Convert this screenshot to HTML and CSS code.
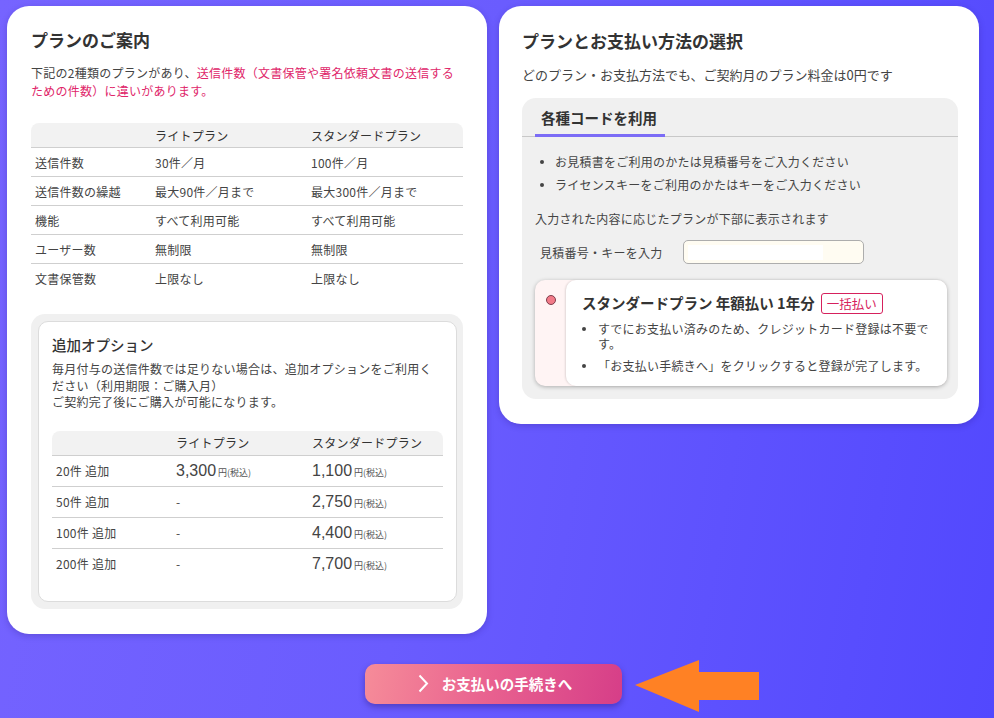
FILE: index.html
```html
<!DOCTYPE html>
<html lang="ja">
<head>
<meta charset="utf-8">
<title>プランとお支払い方法の選択</title>
<link rel="stylesheet" href="styles.css">
</head>
<body>
<div class="page">
  <div class="cards">
    <section class="card card-left">
      <h2 class="card-title">プランのご案内</h2>
      <p class="lead">下記の2種類のプランがあり、<span class="accent">送信件数（文書保管や署名依頼文書の送信するための件数）に違いがあります。</span></p>
      <table class="plan-table">
        <colgroup><col class="c1"><col class="c2"><col class="c3"></colgroup>
        <thead>
          <tr><th></th><th>ライトプラン</th><th>スタンダードプラン</th></tr>
        </thead>
        <tbody>
          <tr><td>送信件数</td><td>30件／月</td><td>100件／月</td></tr>
          <tr><td>送信件数の繰越</td><td>最大90件／月まで</td><td>最大300件／月まで</td></tr>
          <tr><td>機能</td><td>すべて利用可能</td><td>すべて利用可能</td></tr>
          <tr><td>ユーザー数</td><td>無制限</td><td>無制限</td></tr>
          <tr><td>文書保管数</td><td>上限なし</td><td>上限なし</td></tr>
        </tbody>
      </table>
      <div class="option-outer">
        <div class="option-inner">
          <h3 class="option-title">追加オプション</h3>
          <p class="option-text">毎月付与の送信件数では足りない場合は、追加オプションをご利用ください（利用期限：ご購入月）<br>ご契約完了後にご購入が可能になります。</p>
          <table class="option-table">
            <colgroup><col class="o1"><col class="o2"><col class="o3"></colgroup>
            <thead>
              <tr><th></th><th>ライトプラン</th><th>スタンダードプラン</th></tr>
            </thead>
            <tbody>
              <tr><td>20件 追加</td><td><span class="price">3,300</span><span class="yen">円(税込)</span></td><td><span class="price">1,100</span><span class="yen">円(税込)</span></td></tr>
              <tr><td>50件 追加</td><td>-</td><td><span class="price">2,750</span><span class="yen">円(税込)</span></td></tr>
              <tr><td>100件 追加</td><td>-</td><td><span class="price">4,400</span><span class="yen">円(税込)</span></td></tr>
              <tr><td>200件 追加</td><td>-</td><td><span class="price">7,700</span><span class="yen">円(税込)</span></td></tr>
            </tbody>
          </table>
        </div>
      </div>
    </section>

    <section class="card card-right">
      <h2 class="card-title">プランとお支払い方法の選択</h2>
      <p class="sub">どのプラン・お支払方法でも、ご契約月のプラン料金は0円です</p>
      <div class="panel">
        <div class="tabs"><div class="tab">各種コードを利用</div></div>
        <ul class="dots code-list">
          <li>お見積書をご利用のかたは見積番号をご入力ください</li>
          <li>ライセンスキーをご利用のかたはキーをご入力ください</li>
        </ul>
        <p class="note">入力された内容に応じたプランが下部に表示されます</p>
        <div class="input-row">
          <label class="input-label" for="code">見積番号・キーを入力</label>
          <input id="code" class="code-input" type="text">
        </div>
        <div class="plan">
          <div class="plan-radio"><span class="radio"></span></div>
          <div class="plan-body">
            <div class="plan-head"><span class="plan-name">スタンダードプラン 年額払い 1年分</span><span class="badge">一括払い</span></div>
            <ul class="dots plan-list">
              <li>すでにお支払い済みのため、クレジットカード登録は不要です。</li>
              <li>「お支払い手続きへ」をクリックすると登録が完了します。</li>
            </ul>
          </div>
        </div>
      </div>
    </section>
  </div>

  <div class="action">
    <div class="btn-wrap">
      <button class="pay-btn" type="button">
        <svg class="chev" width="11" height="19" viewBox="0 0 11 19"><path d="M1.5 1.5 L9 9.5 L1.5 17.5" fill="none" stroke="#fff" stroke-width="2"/></svg>
        <span>お支払いの手続きへ</span>
      </button>
      <svg class="arrow" width="126" height="52" viewBox="0 0 126 52"><polygon points="0,25 64,0 64,12 124,12 124,40 64,40 64,52" fill="#ff8124"/></svg>
    </div>
  </div>
</div>
</body>
</html>
```

FILE: styles.css
```css
* { box-sizing: border-box; }

html, body {
  margin: 0;
  padding: 0;
}

body {
  min-height: 718px;
  background: linear-gradient(100deg, #7664ff 0%, #6a5cfe 45%, #5248fe 100%);
  font-family: "Noto Sans CJK JP", "Noto Sans", sans-serif;
  font-size: 12px;
  letter-spacing: 0.25px;
  color: #444;
}

.page {
  padding: 6px 15px 0 7px;
}

.cards {
  display: flex;
  gap: 12px;
  align-items: flex-start;
}

.card {
  width: 480px;
  background: #fff;
  border-radius: 22px;
  box-shadow: 0 2px 6px rgba(40, 20, 120, 0.25);
}

.card-left {
  padding: 22px 24px 25px 24px;
}

.card-right {
  padding: 23px 21px 25px 23px;
}

.card-title {
  margin: 0;
  font-size: 17px;
  line-height: 24px;
  font-weight: 700;
  color: #333;
  letter-spacing: 0;
}

.lead {
  margin: 12px 0 0;
  line-height: 18px;
}

.accent {
  color: #e0266a;
}

/* plan table */
table {
  border-collapse: separate;
  border-spacing: 0;
  width: 100%;
  table-layout: fixed;
}

th {
  font-weight: 400;
  text-align: left;
  background: #f2f2f2;
  color: #333;
  border-bottom: 1px solid #cfcfcf;
  padding: 0 4px;
}

th:first-child { border-top-left-radius: 8px; }
th:last-child { border-top-right-radius: 8px; }

td {
  padding: 0 4px;
  border-bottom: 1px solid #cfcfcf;
  color: #444;
}

tbody tr:last-child td { border-bottom: none; }

.plan-table {
  margin-top: 23px;
}

.plan-table .c1 { width: 120px; }
.plan-table .c2 { width: 156px; }
.plan-table .c3 { width: 156px; }

.plan-table th { height: 25px; }
.plan-table td { height: 29px; }
.plan-table tbody tr:last-child td { height: 28px; }

/* option */
.option-outer {
  margin-top: 22px;
  background: #f0f0f0;
  border-radius: 14px;
  padding: 7px 6px 7px 7px;
}

.option-inner {
  background: #fff;
  border: 1px solid #dcdcdc;
  border-radius: 10px;
  padding: 13px 14px 22px 13px;
}

.option-title {
  margin: 0;
  font-size: 14.5px;
  line-height: 20px;
  font-weight: 500;
  color: #333;
  letter-spacing: 0;
}

.option-text {
  margin: 6px 0 0;
  line-height: 16.5px;
  max-width: 388px;
}

.option-table {
  margin-top: 20px;
}

.option-table .o1 { width: 120px; }
.option-table .o2 { width: 136px; }
.option-table .o3 { width: 135px; }

.option-table th { height: 25px; }
.option-table td { height: 31px; }
.option-table tbody tr:last-child td { height: 30px; }

.price {
  font-family: "Liberation Sans", Arial, sans-serif;
  font-size: 16px;
  letter-spacing: 0;
  color: #444;
}

.yen {
  font-size: 9px;
  letter-spacing: 0;
  color: #555;
  margin-left: 2px;
}

/* right card */
.sub {
  margin: 12px 0 0;
  font-size: 13px;
  line-height: 20px;
  letter-spacing: 0;
}

.panel {
  margin-top: 13px;
  background: #f0f0f0;
  border-radius: 14px;
  padding: 0 11px 13px 13px;
}

.tabs {
  border-bottom: 1px solid #c8c8c8;
  display: flex;
  margin: 0 -11px 0 -13px;
  padding-left: 13px;
}

.tab {
  font-size: 14.5px;
  font-weight: 700;
  color: #333;
  letter-spacing: 0;
  line-height: 20px;
  padding: 10px 8px 6px 6px;
  border-bottom: 3px solid #7b6cf6;
  margin-bottom: -1px;
}

.dots {
  list-style: none;
  margin: 0;
  padding: 0;
}

.dots li {
  display: flex;
  align-items: flex-start;
}

.dots li::before {
  content: "";
  flex: none;
  width: 4px;
  height: 4px;
  border-radius: 50%;
  background: #444;
}

.code-list {
  margin-top: 16px;
  padding-left: 5px;
}

.code-list li {
  line-height: 18px;
}

.code-list li + li {
  margin-top: 5px;
}

.code-list li::before {
  margin: 7px 11px 0 0;
}

.note {
  margin: 16px 0 0;
  line-height: 18px;
}

.input-row {
  margin-top: 12px;
  display: flex;
  align-items: center;
}

.input-label {
  width: 148px;
  padding-left: 5px;
  color: #444;
}

.code-input {
  width: 181px;
  height: 24px;
  border: 1px solid #adadad;
  border-radius: 5px;
  background: linear-gradient(#fff, #fff) no-repeat 4px 4px / 135px 15px, #fffcf2;
  padding: 0 6px;
  font: inherit;
  outline: none;
}

.plan {
  margin-top: 16px;
  display: flex;
  background: #fff4f4;
  border-radius: 10px;
  box-shadow: 0 1px 4px rgba(0, 0, 0, 0.28);
}

.plan-radio {
  width: 31px;
  flex: none;
  display: flex;
  justify-content: center;
  padding-top: 15px;
}

.radio {
  width: 10px;
  height: 10px;
  border-radius: 50%;
  background: #f27a88;
  border: 1.5px solid #7e3d4c;
}

.plan-body {
  flex: 1;
  background: #fff;
  border-radius: 10px;
  box-shadow: -1px 0 2px rgba(0, 0, 0, 0.12);
  padding: 12px 14px 13px 16px;
}

.plan-head {
  display: flex;
  align-items: center;
  gap: 6px;
}

.plan-name {
  font-size: 14.5px;
  font-weight: 700;
  color: #333;
  letter-spacing: 0;
  line-height: 22px;
}

.badge {
  border: 1px solid #d6215d;
  border-radius: 3px;
  color: #d6215d;
  font-size: 12.5px;
  letter-spacing: 0;
  line-height: 19px;
  padding: 0 5px;
}

.plan-list {
  margin-top: 7px;
}

.plan-list li {
  line-height: 15px;
}

.plan-list li + li {
  margin-top: 7px;
}

.plan-list li::before {
  margin: 6px 12px 0 0;
}

/* action */
.action {
  width: 972px;
  margin-top: 30px;
  display: flex;
  justify-content: center;
}

.btn-wrap {
  position: relative;
}

.pay-btn {
  width: 257px;
  height: 40px;
  border: none;
  border-radius: 10px;
  background: linear-gradient(100deg, #f68c99 0%, #e8608f 50%, #d63e88 100%);
  box-shadow: 0 3px 6px rgba(30, 10, 90, 0.35);
  color: #fff;
  font-family: "Noto Sans CJK JP", sans-serif;
  font-size: 14.5px;
  font-weight: 700;
  display: flex;
  align-items: center;
  justify-content: center;
  gap: 13px;
  padding: 0 0 0 4px;
  cursor: pointer;
}

.arrow {
  position: absolute;
  left: calc(100% + 13px);
  top: -4px;
}
```
